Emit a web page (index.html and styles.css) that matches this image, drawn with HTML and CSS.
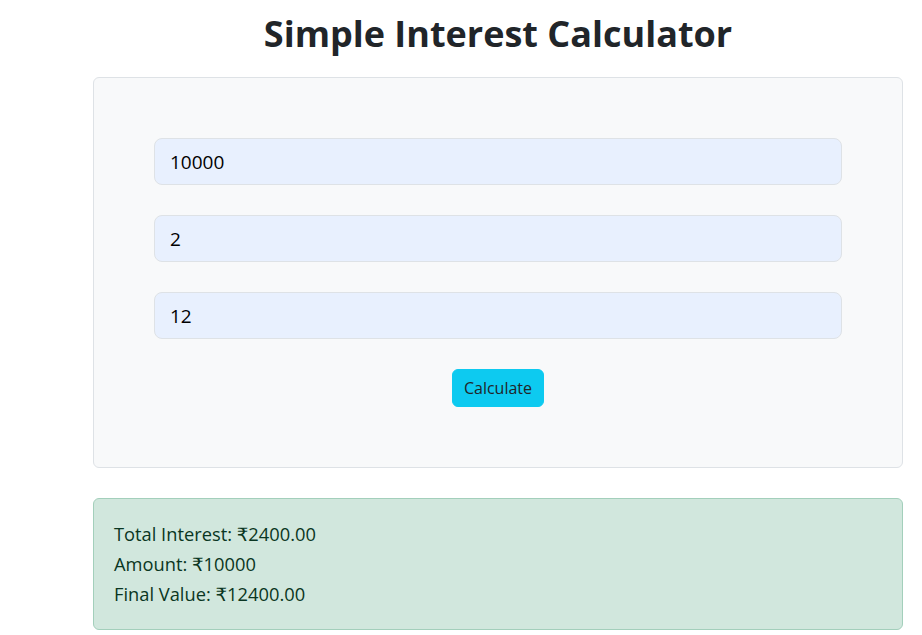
FILE: index.html
```html
<!DOCTYPE html>
<html lang="en">
<head>
<meta charset="utf-8">
<title>Simple Interest Calculator</title>
<link rel="stylesheet" href="styles.css">
</head>
<body>
<main class="page">
  <h1 class="title">Simple Interest Calculator</h1>
  <form class="card">
    <input class="field" type="text" value="10000">
    <input class="field" type="text" value="2">
    <input class="field" type="text" value="12">
    <div class="actions">
      <button class="btn" type="button">Calculate</button>
    </div>
  </form>
  <div class="result">
    <p class="line">Total Interest: ₹2400.00</p>
    <p class="line">Amount: ₹10000</p>
    <p class="line">Final Value: ₹12400.00</p>
  </div>
</main>
</body>
</html>
```
FILE: styles.css
```css
* { box-sizing: border-box; }
html, body { margin: 0; padding: 0; background: #fff; }
body {
  font-family: "Open Sans", "DejaVu Sans", sans-serif;
  color: #212529;
}
.page {
  width: 810px;
  margin-left: 93px;
  display: flex;
  flex-direction: column;
}
.title {
  margin: 10px 0 19px;
  font-size: 36px;
  line-height: 48px;
  font-weight: 700;
  text-align: center;
  color: #212529;
}
.card {
  margin: 0;
  background: #f8f9fa;
  border: 1px solid #dee2e6;
  border-radius: 6px;
  padding: 60px;
  display: flex;
  flex-direction: column;
  gap: 30px;
}
.field {
  display: block;
  width: 100%;
  height: 47px;
  padding: 0 15px;
  font-family: inherit;
  font-size: 19px;
  color: #000;
  background: #e8f0fe;
  border: 1px solid #dee2e6;
  border-radius: 8px;
  outline: none;
}
.actions {
  display: flex;
  justify-content: center;
}
.btn {
  height: 38px;
  padding: 0 11px;
  font-family: inherit;
  font-size: 16px;
  color: #212529;
  background: #0dcaf0;
  border: 1px solid #0dcaf0;
  border-radius: 6px;
}
.result {
  margin-top: 30px;
  background: #d1e7dd;
  border: 1px solid #a3cfbb;
  border-radius: 6px;
  padding: 20px;
  color: #0a3622;
}
.line {
  margin: 0;
  font-size: 18.3px;
  line-height: 30px;
}
```
